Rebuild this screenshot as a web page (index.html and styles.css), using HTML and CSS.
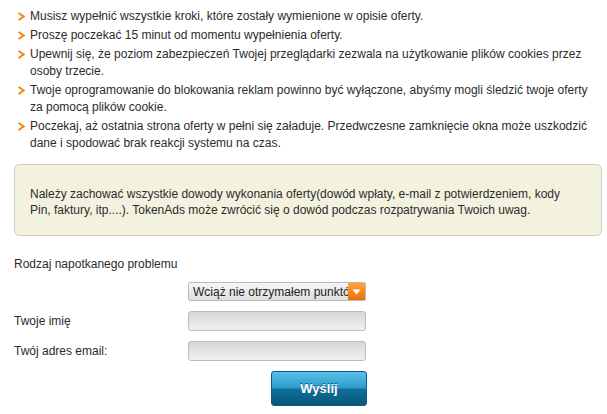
FILE: index.html
```html
<!DOCTYPE html>
<html lang="pl">
<head>
<meta charset="utf-8">
<link rel="stylesheet" href="styles.css">
</head>
<body>
<div class="page">
  <ul class="steps">
    <li>Musisz wypełnić wszystkie kroki, które zostały wymienione w opisie oferty.</li>
    <li>Proszę poczekać 15 minut od momentu wypełnienia oferty.</li>
    <li>Upewnij się, że poziom zabezpieczeń Twojej przeglądarki zezwala na użytkowanie plików cookies przez osoby trzecie.</li>
    <li>Twoje oprogramowanie do blokowania reklam powinno być wyłączone, abyśmy mogli śledzić twoje oferty za pomocą plików cookie.</li>
    <li>Poczekaj, aż ostatnia strona oferty w pełni się załaduje. Przedwczesne zamknięcie okna może uszkodzić dane i spodować brak reakcji systemu na czas.</li>
  </ul>
  <div class="note">Należy zachować wszystkie dowody wykonania oferty(dowód wpłaty, e-mail z potwierdzeniem, kody Pin, faktury, itp....). TokenAds może zwrócić się o dowód podczas rozpatrywania Twoich uwag.</div>
  <form class="form">
    <label class="lbl full">Rodzaj napotkanego problemu</label>
    <div class="select"><span class="select-text">Wciąż nie otrzymałem punktów</span><span class="select-arrow"><svg width="9" height="6" viewBox="0 0 9 6"><path d="M0.5 0.5h8L4.5 5.5z" fill="#fff"/></svg></span></div>
    <label class="lbl">Twoje imię</label>
    <div class="input"></div>
    <label class="lbl">Twój adres email:</label>
    <div class="input"></div>
    <div class="btn-row"><button type="button" class="btn">Wyślij</button></div>
  </form>
</div>
</body>
</html>
```
FILE: styles.css
```css
html, body {
  margin: 0;
  padding: 0;
  background: #fff;
}
.page {
  padding: 8px 5px 0 14px;
  font-family: "Liberation Sans", Arial, sans-serif;
  font-size: 12px;
  color: #2b2b2b;
}
.steps {
  list-style: none;
  margin: 0;
  padding: 0;
}
.steps li {
  position: relative;
  padding-left: 16px;
  line-height: 17.3px;
  margin-bottom: 1.5px;
  padding-right: 10px;
}
.steps li::before {
  content: "";
  position: absolute;
  left: 2px;
  top: 5px;
  width: 5px;
  height: 5px;
  border-right: 2px solid #f08a1c;
  border-bottom: 2px solid #f08a1c;
  transform: rotate(-45deg) skew(8deg, 8deg);
}
.note {
  margin-top: 12px;
  background: #f3f2df;
  border: 1px solid #cfcfc2;
  border-radius: 5px;
  padding: 21px 22px 17px 15px;
  line-height: 16px;
  width: 549px;
}
.form {
  display: grid;
  grid-template-columns: 174px 178px;
  row-gap: 10px;
  margin-top: 20px;
  align-items: center;
}
.lbl {
  line-height: 17px;
}
.full {
  grid-column: 1 / 3;
  margin-bottom: -1px;
}
.select {
  grid-column: 2;
  height: 17px;
  border: 1px solid #b9b9b9;
  border-radius: 2px;
  background: linear-gradient(#f6f6f6, #dedede);
  display: flex;
  align-items: center;
  overflow: hidden;
  font-size: 12px;
  color: #222;
}
.select-text {
  flex: 1;
  white-space: nowrap;
  overflow: hidden;
  padding-left: 4px;
}
.select-arrow {
  width: 17px;
  height: 17px;
  background: linear-gradient(#ffa43a, #f06d06);
  display: flex;
  align-items: center;
  justify-content: center;
}
.input {
  height: 18px;
  border: 1px solid #bdbdbd;
  border-radius: 3px;
  background: linear-gradient(#d6d6d6, #f1f1f1);
}
.btn-row {
  grid-column: 2;
  display: flex;
  justify-content: flex-end;
}
.btn {
  width: 96px;
  height: 35px;
  border: 1px solid #0d5b80;
  border-radius: 3px;
  background: linear-gradient(#58c1ea 0%, #2e9cc9 48%, #0f6f9c 52%, #075779 100%);
  color: #fff;
  font-family: "Liberation Sans", Arial, sans-serif;
  font-weight: bold;
  font-size: 13px;
  text-shadow: 0 -1px 0 rgba(0,40,70,0.6);
  padding: 0;
  margin-right: -1px;
}
```
